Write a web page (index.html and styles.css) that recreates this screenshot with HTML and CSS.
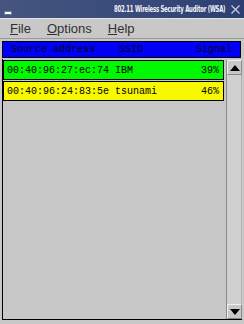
FILE: index.html
```html
<!DOCTYPE html>
<html>
<head>
<meta charset="utf-8">
<link rel="stylesheet" href="styles.css">
</head>
<body>
<div class="window">
  <div class="titlebar">
    <span class="minbtn"></span>
    <span class="title">802.11 Wireless Security Auditor (WSA)</span>
    <svg class="close" width="9" height="9" viewBox="0 0 9 9"><path d="M0.5 0.5L8.5 8.5M8.5 0.5L0.5 8.5" stroke="#c8d0e0" stroke-width="1.2" fill="none"/></svg>
  </div>
  <div class="menubar">
    <span class="menu"><u>F</u>ile</span>
    <span class="menu"><u>O</u>ptions</span>
    <span class="menu"><u>H</u>elp</span>
  </div>
  <div class="header">
    <span class="col-addr">Source address</span>
    <span class="col-ssid">SSID</span>
    <span class="col-sig">Signal</span>
  </div>
  <div class="listframe">
    <div class="rows">
      <div class="row green"><span class="rtext">00:40:96:27:ec:74 IBM</span><span class="rsig">39%</span></div>
      <div class="row yellow"><span class="rtext">00:40:96:24:83:5e tsunami</span><span class="rsig">46%</span></div>
    </div>
    <div class="scrollbar">
      <div class="sbtn"><svg width="10" height="6" viewBox="0 0 10 6"><path d="M0 6L5 0L10 6Z" fill="#000"/></svg></div>
      <div class="track"></div>
      <div class="sbtn"><svg width="10" height="6" viewBox="0 0 10 6"><path d="M0 0L10 0L5 6Z" fill="#000"/></svg></div>
    </div>
  </div>
</div>
</body>
</html>
```
FILE: styles.css
```css
html, body {
  margin: 0;
  padding: 0;
  background: #c8c8c8;
}
.window {
  width: 244px;
  height: 324px;
  overflow: hidden;
  background: #c8c8c8;
  display: flex;
  flex-direction: column;
}
.titlebar {
  height: 18px;
  flex: none;
  background: linear-gradient(90deg, #45557e 0%, #3a4c7a 50%, #2c3f72 100%);
  display: flex;
  align-items: center;
  padding: 0 4px 0 4px;
  box-sizing: border-box;
}
.minbtn {
  width: 6px;
  height: 2px;
  border: 1px solid #6a78a0;
  background: #ffffff;
  margin-top: 7px;
  margin-right: auto;
}
.title {
  font-family: "DejaVu Sans Condensed", "DejaVu Sans", sans-serif;
  font-stretch: condensed;
  font-size: 8px;
  font-weight: bold;
  letter-spacing: -0.3px;
  color: #f4f4fa;
  white-space: nowrap;
  margin-right: 6px;
  transform: scaleX(0.74);
  transform-origin: right center;
}
.close {
  display: block;
}
.menubar {
  height: 19px;
  flex: none;
  border-top: 1px solid #e4e4e4;
  border-bottom: 1px solid #9a9a9a;
  background: #c8c8c8;
  display: flex;
  align-items: center;
  padding-left: 10px;
  gap: 16px;
  font-family: "Liberation Sans", Arial, sans-serif;
  font-size: 13px;
  color: #303030;
}
.menu u {
  text-decoration-thickness: 1px;
}
.header {
  margin: 2px 3px 0 2px;
  height: 15px;
  flex: none;
  border: 1px solid #000;
  background: #0000f8;
  display: flex;
  align-items: center;
  font-family: "Liberation Mono", "DejaVu Sans Mono", monospace;
  font-size: 10px;
  color: #000010;
  padding: 0 8px 0 8px;
}
.col-addr {
  width: 108px;
}
.col-sig {
  margin-left: auto;
}
.listframe {
  flex: 1;
  display: flex;
  margin: 1px 2px 4px 2px;
  border-left: 1px solid #000;
  border-bottom: 1px solid #000;
}
.rows {
  flex: 1;
  padding-top: 1px;
  display: flex;
  flex-direction: column;
  gap: 1px;
}
.row {
  height: 18px;
  border: 1px solid #000;
  display: flex;
  align-items: center;
  padding: 0 4px 0 3px;
  font-family: "Liberation Mono", "DejaVu Sans Mono", monospace;
  font-size: 10px;
  color: #000;
  margin-right: 2px;
}
.row .rsig {
  margin-left: auto;
}
.green { background: #00f800; }
.yellow { background: #f8f800; }
.scrollbar {
  width: 15px;
  flex: none;
  display: flex;
  flex-direction: column;
  margin-top: 1px;
  border-left: 1px solid #8a8a8a;
  background: #d0d0d0;
}
.sbtn {
  height: 15px;
  flex: none;
  display: flex;
  align-items: center;
  justify-content: center;
  background: #c8c8c8;
  border-top: 1px solid #f0f0f0;
  border-left: 1px solid #f0f0f0;
  border-bottom: 1px solid #888;
  border-right: 1px solid #888;
  box-sizing: border-box;
}
.track {
  flex: 1;
  background: #d0d0d0;
  border-right: 1px solid #b0b0b0;
}
```
